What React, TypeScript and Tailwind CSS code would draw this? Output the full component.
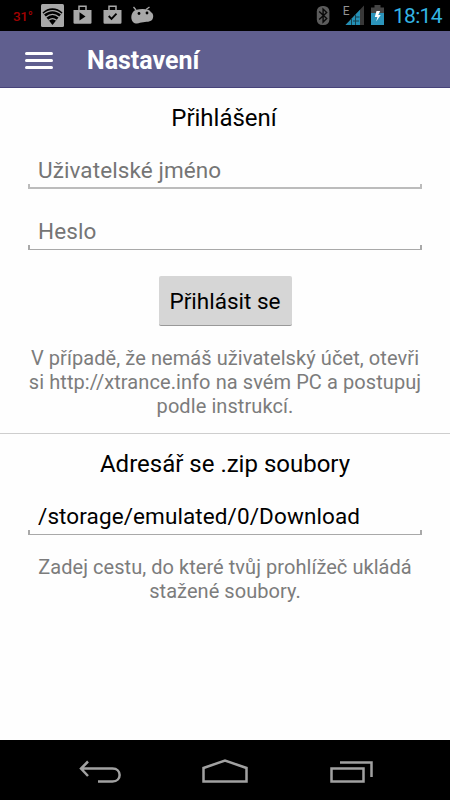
import React from "react";

function StatusBar() {
  return (
    <header className="flex h-[31px] shrink-0 items-start bg-black">
      <span className="ml-[13px] mt-[8px] w-[28px] text-[13.5px] font-medium leading-[16px] tracking-[-0.3px] text-[#a00202]">31°</span>
      <svg className="h-[31px] w-[120px] shrink-0" viewBox="41 0 120 31" fill="#a8a8a8">
        <rect x="41" y="4" width="23" height="23" rx="1.5" />
        <path d="M52.5 25 42.5 12.5C48 6.8 57 6.8 62.5 12.5Z" fill="#000" />
        <path d="M43.4 14.4C49 9.4 56 9.4 61.6 14.4M45.8 17.3C50 13.7 55 13.7 59.2 17.3M48.5 20.3C51 18.2 54 18.2 56.5 20.3" fill="none" stroke="#a8a8a8" strokeWidth="1.2" />
        <path d="M73.5 10h18v12.5q0 1.2-1.2 1.2H74.7q-1.2 0-1.2-1.2Z" />
        <path d="M79 10V6.2h7V10" fill="none" stroke="#a8a8a8" strokeWidth="1.5" />
        <path d="M79.5 12.3v8.2l6-4.1Z" fill="#000" />
        <path d="M103.5 10h18v12.5q0 1.2-1.2 1.2h-15.6q-1.2 0-1.2-1.2Z" />
        <path d="M109 10V6.2h7V10" fill="none" stroke="#a8a8a8" strokeWidth="1.5" />
        <path d="m108.7 16 2.8 2.8 5-5.2" fill="none" stroke="#000" strokeWidth="1.9" />
        <path d="M133 12C134.5 9.7 138 9 142.5 9S150 10 151 12.3C153.5 13.5 154 17.5 152 20C149.5 22.5 144 21.5 140 22.8C138 24 134.5 23.8 133 22C130.8 19.5 130.8 15 133 12Z" />
        <path d="m136 10-2.5-3m12.5 2.5L149.5 7" fill="none" stroke="#a8a8a8" strokeWidth="1.3" />
        <circle cx="139" cy="13.5" r="1.4" fill="#000" />
        <circle cx="147" cy="13" r="1.4" fill="#000" />
      </svg>
      <svg className="ml-auto h-[31px] w-[81px] shrink-0" viewBox="312 0 81 31">
        <rect x="316.8" y="6" width="12.6" height="19" rx="5.5" fill="#5b5b5b" />
        <path d="m319.2 11.5 7.5 7-3.6 3.5V9l3.6 3.4-7.5 7" fill="none" stroke="#080808" strokeWidth="1.4" />
        <text x="342.7" y="15" fontFamily="Roboto, sans-serif" fontSize="12" fill="#929292">E</text>
        <path d="M345.5 25 364 5.5V25Z" fill="#383838" />
        <path d="M345.5 25 360 9.7V25Z" fill="#238fb5" />
        <path d="M351.5 19v6m4-10.5V25m-.5-8h4.500M353 21h6" stroke="#17414e" strokeWidth="1" />
        <path d="M374.5 5h6v2.5h3.5v8h-13v-8h3.500Z" fill="#454545" />
        <path d="M371 13h13v12h-13Z" fill="#2b94bb" />
        <path d="m376.5 11-1.7 6h2.6l-1.2 4.5 4.5-6.5h-2.5l2-4Z" fill="#fff" />
      </svg>
      <time className="mr-[8px] mt-[4px] w-[49px] whitespace-nowrap text-[21px] leading-[24px] tracking-[-0.7px] text-[#34b5e4]">18:14</time>
    </header>
  );
}

function Field({ label, value, faint }: { label: string; value?: string; faint?: boolean }) {
  return (
    <div className="mx-[28px] flex flex-col">
      <input
        aria-label={label}
        placeholder={label}
        defaultValue={value}
        className="h-[31px] w-full bg-transparent px-[10px] pt-[3px] text-[22.5px] leading-[28px] tracking-[0.1px] text-black outline-none placeholder:text-[#757575]"
      />
      <div className={faint ? "h-[5px] border-x-2 border-b-2 border-[#bcbcbc]" : "h-[5px] border-x-2 border-b border-[#a9a9a9]"} />
    </div>
  );
}

function NavBar() {
  return (
    <footer className="mt-auto h-[60px] shrink-0 bg-black">
      <svg className="h-[60px] w-[450px]" viewBox="0 740 450 60" fill="none" stroke="#a1a1a1" strokeWidth="2.5">
        <path d="M98 781.5h14.5C122 781.5 122 768.5 112.5 768.5H81.5M88 761.5l-7 7 7 7.5" />
        <path d="m203.5 768 21.5-7.5 21.5 7.5v13.5h-43Z" />
        <path d="M331.5 768.5h32v13h-32ZM340 762.5h31.5V777" />
      </svg>
    </footer>
  );
}

export default function App() {
  return (
    <div className="flex h-[800px] w-[450px] flex-col overflow-hidden bg-[#fefefe] font-['Roboto',sans-serif]">
      <StatusBar />
      <div className="flex h-[57px] shrink-0 items-center border-b border-[#47437a] bg-[#605f8f] pt-[2px]">
        <button aria-label="Menu" className="ml-[25px] flex w-[28px] flex-col gap-[4px]">
          <span className="h-[3px] rounded-full bg-white" />
          <span className="h-[3px] rounded-full bg-white" />
          <span className="h-[3px] rounded-full bg-white" />
        </button>
        <h1 className="ml-[34px] pt-[2px] text-[25px] font-bold leading-[30px] text-white">Nastavení</h1>
      </div>
      <main className="flex flex-col">
        <section className="flex flex-col border-b border-[#cecece] pb-[15px]">
          <h2 className="h-[65px] pr-[2px] text-center text-[24px] leading-[61px] text-black">Přihlášení</h2>
          <Field label="Uživatelské jméno" faint />
          <div className="mt-[25px]"><Field label="Heslo" /></div>
          <button className="mt-[26px] h-[50px] w-[133px] self-center rounded-[2px] border-b border-[#999] bg-[#d6d6d6] pt-[1px] text-[22.5px] leading-[49px] text-black">Přihlásit se</button>
          <p className="mt-[20px] whitespace-nowrap text-center text-[20px] leading-[24px] tracking-[0.08px] text-[#7c7c7c]">
            V případě, že nemáš uživatelský účet, otevři<br />
            si http://xtrance.info na svém PC a postupuj<br />
            podle instrukcí.
          </p>
        </section>
        <section className="flex flex-col">
          <h2 className="h-[65px] text-center text-[24px] leading-[61px] text-black">Adresář se .zip soubory</h2>
          <Field label="Adresář" value="/storage/emulated/0/Download" />
          <p className="mt-[20px] text-center text-[20px] leading-[24px] tracking-[0.05px] text-[#7c7c7c]">
            Zadej cestu, do které tvůj prohlížeč ukládá<br />stažené soubory.
          </p>
        </section>
      </main>
      <NavBar />
    </div>
  );
}
